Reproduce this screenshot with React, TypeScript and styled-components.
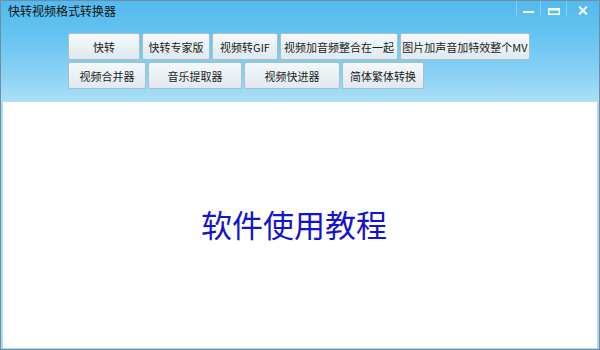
import React from "react";
import styled, { createGlobalStyle } from "styled-components";

const Global = createGlobalStyle`
  html, body { margin: 0; padding: 0; background: #ffffff; }
  body { font-family: "Noto Sans CJK SC", "Noto Sans", sans-serif; }
`;

const Window = styled.div`
  width: 600px;
  height: 350px;
  box-sizing: border-box;
  border: 1px solid #6f8ea3;
  background: #a9dcf5;
  display: flex;
  flex-direction: column;
  overflow: hidden;
`;

const Header = styled.div`
  background: linear-gradient(180deg, #52baee 0%, #66c4f1 35%, #8ed2f4 75%, #ace0f6 100%);
`;

const TitleBar = styled.div`
  height: 20px;
  display: flex;
  align-items: flex-start;
  justify-content: space-between;
`;

const Title = styled.div`
  font-size: 12px;
  line-height: 12px;
  color: #111;
  padding: 4px 0 0 7px;
`;

const Controls = styled.div`
  display: flex;
`;

const Ctrl = styled.div<{ $w: number; $top: number }>`
  width: ${(p) => p.$w}px;
  height: 15px;
  box-sizing: border-box;
  padding-top: ${(p) => p.$top}px;
  border-left: 1px solid rgba(255, 255, 255, 0.3);
  display: flex;
  align-items: flex-start;
  justify-content: center;
`;

const Toolbar = styled.div`
  padding: 12px 0 13px 67px;
  display: flex;
  flex-direction: column;
  gap: 2px;
`;

const Row = styled.div`
  display: flex;
  gap: 2px;
`;

const Btn = styled.div<{ $w: number }>`
  width: ${(p) => p.$w}px;
  height: 27px;
  box-sizing: border-box;
  border: 1px solid #a9bdcb;
  border-radius: 2px;
  background: linear-gradient(180deg, #f4f8fa 0%, #eaf1f5 50%, #dfe9ef 100%);
  font-size: 11px;
  color: #222;
  display: flex;
  align-items: center;
  justify-content: center;
  white-space: nowrap;
`;

const Content = styled.div`
  flex: 1;
  margin: 0 2px 1px 2px;
  background: #ffffff;
  display: flex;
  align-items: center;
  justify-content: center;
`;

const BigText = styled.div`
  font-size: 31px;
  font-weight: 400;
  color: #1414cc;
  margin-right: 12px;
  margin-top: -4px;
`;

const row1: [string, number][] = [
  ["快转", 72],
  ["快转专家版", 68],
  ["视频转GIF", 66],
  ["视频加音频整合在一起", 118],
  ["图片加声音加特效整个MV", 130],
];
const row2: [string, number][] = [
  ["视频合并器", 78],
  ["音乐提取器", 94],
  ["视频快进器", 96],
  ["简体繁体转换", 82],
];

export default function App() {
  return (
    <>
      <Global />
      <Window>
        <Header>
          <TitleBar>
            <Title>快转视频格式转换器</Title>
            <Controls>
              <Ctrl $w={24} $top={10}>
                <svg width="11" height="2" viewBox="0 0 11 2">
                  <rect x="0" y="0" width="11" height="2" fill="#fff" />
                </svg>
              </Ctrl>
              <Ctrl $w={26} $top={7}>
                <svg width="12" height="7" viewBox="0 0 12 7">
                  <rect x="0.75" y="0.75" width="10.5" height="5.5" fill="none" stroke="#fff" strokeWidth="1.5" />
                  <rect x="0" y="0" width="12" height="2.5" fill="#fff" />
                </svg>
              </Ctrl>
              <Ctrl $w={33} $top={5}>
                <svg width="10" height="9" viewBox="0 0 10 9">
                  <path d="M1 0.5 L9 8.5 M9 0.5 L1 8.5" stroke="#fff" strokeWidth="2" />
                </svg>
              </Ctrl>
            </Controls>
          </TitleBar>
          <Toolbar>
            <Row>
              {row1.map(([t, w]) => (
                <Btn key={t} $w={w}>{t}</Btn>
              ))}
            </Row>
            <Row>
              {row2.map(([t, w]) => (
                <Btn key={t} $w={w}>{t}</Btn>
              ))}
            </Row>
          </Toolbar>
        </Header>
        <Content>
          <BigText>软件使用教程</BigText>
        </Content>
      </Window>
    </>
  );
}
